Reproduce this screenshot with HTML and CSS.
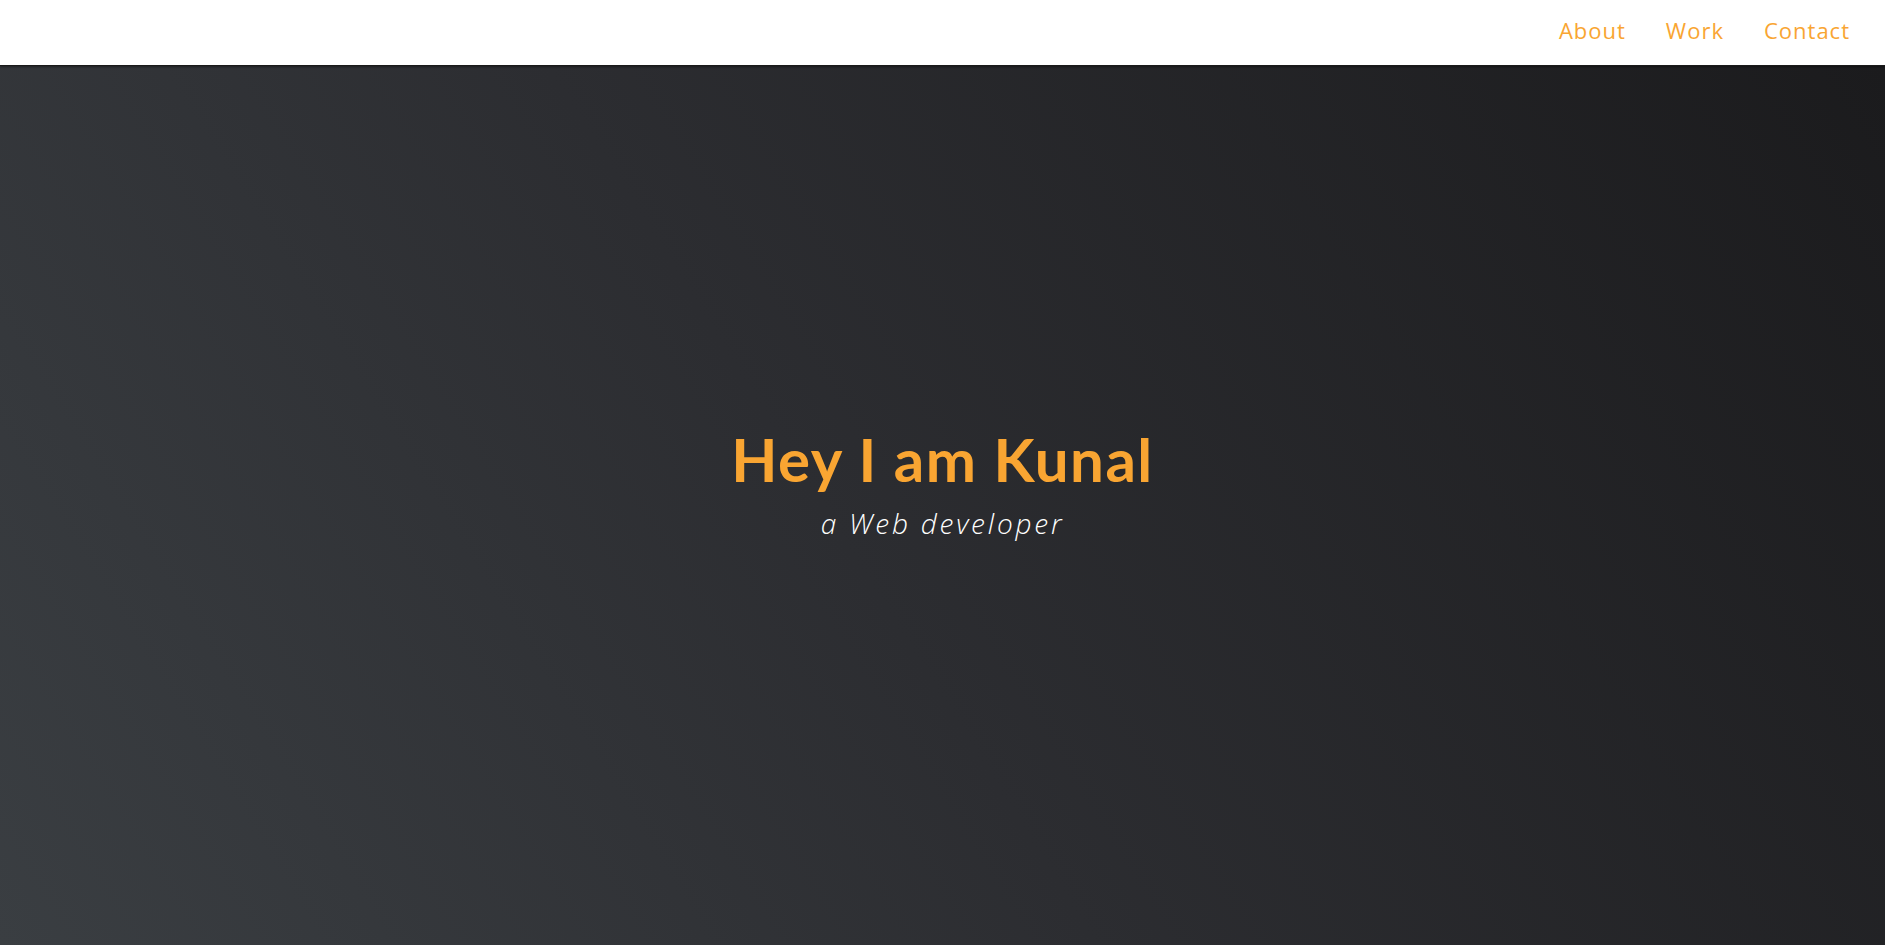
FILE: index.html
```html
<!DOCTYPE html>
<html lang="en">
<head>
<meta charset="utf-8">
<title>Kunal</title>
<link rel="stylesheet" href="styles.css">
</head>
<body>
<header class="site-header">
  <nav class="nav">
    <a class="nav-link" href="#about">About</a>
    <a class="nav-link" href="#work">Work</a>
    <a class="nav-link" href="#contact">Contact</a>
  </nav>
</header>
<main class="hero">
  <div class="hero-text">
    <h1 class="hero-title">Hey I am Kunal</h1>
    <p class="hero-sub">a Web developer</p>
  </div>
</main>
</body>
</html>
```
FILE: styles.css
```css
* { box-sizing: border-box; }
html, body { margin: 0; padding: 0; }
body {
  font-family: "Open Sans", "Noto Sans", sans-serif;
  background: #2b2c30;
  height: 945px;
  overflow: hidden;
}
.site-header {
  height: 66px;
  background: #ffffff;
  display: flex;
  justify-content: flex-end;
  align-items: center;
  padding-right: 35px;
  border-bottom: 1px solid #1a1a1a;
  box-shadow: 0 1px 2px rgba(0,0,0,0.4);
  position: relative;
  z-index: 1;
}
.nav {
  display: flex;
  gap: 40px;
  padding-bottom: 5px;
}
.nav-link {
  color: #f9a532;
  text-decoration: none;
  font-size: 22px;
  font-weight: 400;
  letter-spacing: 1px;
}
.hero {
  height: 879px;
  background: linear-gradient(58deg, #3a3e42 0%, #2c2d31 45%, #1b1b1d 100%);
  display: flex;
  justify-content: center;
  align-items: center;
  padding-bottom: 46px;
}
.hero-text {
  text-align: center;
}
.hero-title {
  margin: 0;
  color: #f9a532;
  font-family: "Lato", "Inter", sans-serif;
  font-weight: 700;
  font-size: 60px;
  letter-spacing: 1.5px;
  line-height: 1.2;
}
.hero-sub {
  margin: 10px 0 0;
  color: #ffffff;
  font-style: italic;
  font-weight: 300;
  font-size: 28px;
  letter-spacing: 2.8px;
  line-height: 1.3;
}
```
